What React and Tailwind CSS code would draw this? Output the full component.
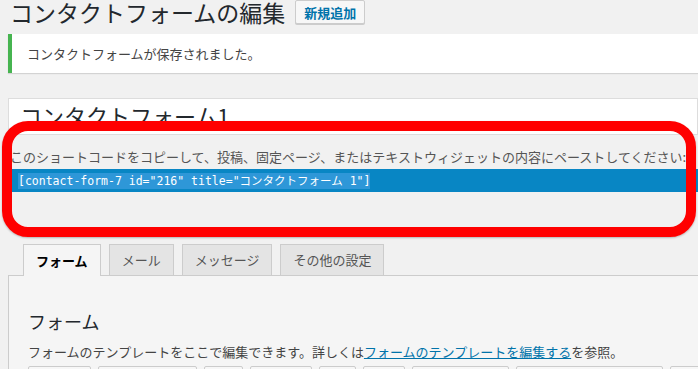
import React from "react";

const tabs = [
  {label: "フォーム", active: true},
  {label: "メール"},
  {label: "メッセージ"},
  {label: "その他の設定"},
];

const tagButtons = [
  {label: "テキスト", w: "w-[63px]"},
  {label: "メールアドレス", w: "w-[99px]"},
  {label: "URL", w: "w-[39px]"},
  {label: "電話番号", w: "w-[62px]"},
  {label: "数値", w: "w-[37px]"},
  {label: "日付", w: "w-[42px]"},
  {label: "テキストエリア", w: "w-[97px]"},
  {label: "ドロップダウンメニュー", w: "w-[147px]"},
  {label: "チェックボックス", w: "w-[110px]"},
];

const App = () => {
  return (
    <div className="relative w-[698px] h-[369px] overflow-hidden bg-[#f1f1f1] text-[#444] font-['Noto_Sans_CJK_JP','Noto_Sans',sans-serif]">
      {/* page title */}
      <div className="flex items-center gap-[10px] pl-[10px] h-[24px]">
        <h1 className="text-[23px] leading-[24px] text-[#23282d] whitespace-nowrap">
          コンタクトフォームの編集
        </h1>
        <button className="h-[24px] px-[8px] border border-[#ccc] bg-[#f7f7f7] rounded-[2px] text-[13px] leading-none font-bold text-[#0073aa] shadow-[0_1px_0_#ccc]">
          新規追加
        </button>
      </div>

      {/* notice */}
      <div className="ml-[8px] mt-[10px] h-[39px] flex items-center bg-white border-l-4 border-[#46b450] pl-[15px] shadow-[0_1px_1px_rgba(0,0,0,0.12)]">
        <span className="text-[13px] text-[#444]">コンタクトフォームが保存されました。</span>
      </div>

      {/* title input */}
      <div className="ml-[8px] mt-[25px] h-[37px] bg-white border border-[#ddd] pl-[11px] pt-[5px]">
        <div className="text-[22px] leading-[22px] text-[#23282d] whitespace-nowrap">コンタクトフォーム1</div>
      </div>

      {/* shortcode */}
      <p className="mt-[13px] pl-[10px] text-[13px] leading-[18px] text-[#555] whitespace-nowrap">
        このショートコードをコピーして、投稿、固定ページ、またはテキストウィジェットの内容にペーストしてください:
      </p>
      <div className="ml-[11px] mt-[3px] h-[23px] bg-[#0886c4] flex items-center pl-[7px]">
        <span className="bg-[#2e97d8] text-white text-[11.5px] leading-[16px] whitespace-nowrap font-['DejaVu_Sans_Mono','Noto_Sans_CJK_JP',monospace]">
          [contact-form-7 id="216" title="コンタクトフォーム 1"]
        </span>
      </div>

      {/* tabs + panel */}
      <div className="ml-[8px] mt-[52px]">
        <div className="flex items-start gap-[8px] pl-[15px] h-[31px]">
          {tabs.map((t) => (
            <div
              key={t.label}
              className={
                t.active
                  ? "relative z-10 h-[32px] px-[12px] flex items-center border border-b-0 border-[#ccc] bg-[#f5f5f5] text-[13px] font-bold text-black"
                  : "h-[31px] px-[12px] flex items-center border border-b-0 border-[#ccc] bg-[#e4e4e4] text-[13px] text-[#555]"
              }
            >
              {t.label}
            </div>
          ))}
        </div>
        <div className="bg-[#f5f5f5] border-t border-l border-[#ccc] pl-[19px] pt-[33px] h-[120px]">
          <h2 className="text-[18px] leading-[24px] text-[#23282d]">フォーム</h2>
          <p className="mt-[10px] text-[13px] leading-[18px] text-[#444] whitespace-nowrap">
            フォームのテンプレートをここで編集できます。詳しくは
            <a href="#" className="text-[#0073aa] underline">フォームのテンプレートを編集する</a>
            を参照。
          </p>
          <div className="mt-[5px] flex gap-[7px]">
            {tagButtons.map((b) => (
              <span
                key={b.label}
                className={`${b.w} shrink-0 h-[28px] flex items-center justify-center border border-[#ccc] bg-[#f7f7f7] rounded-[2px] text-[12px] text-[#555] whitespace-nowrap overflow-hidden`}
              >
                {b.label}
              </span>
            ))}
          </div>
        </div>
      </div>

      {/* red annotation over the shortcode box */}
      <div className="absolute left-[2px] top-[121px] w-[694px] h-[116px] border-[10px] border-[#ff0000] rounded-[26px] pointer-events-none shadow-[0_1px_2px_rgba(0,0,0,0.25)]" />
    </div>
  );
};

export default App;
